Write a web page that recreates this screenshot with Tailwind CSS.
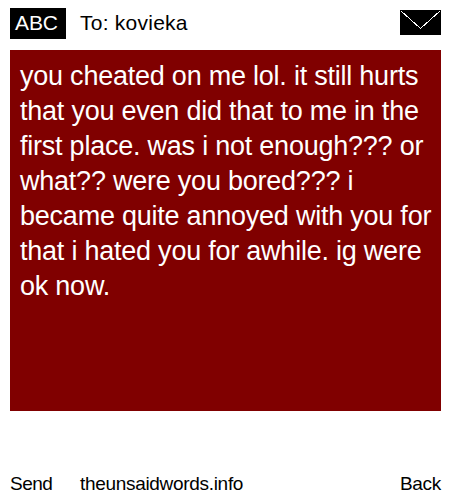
<!DOCTYPE html>
<html lang="en"><head><meta charset="utf-8"><title>Message</title>
<script src="https://cdn.jsdelivr.net/npm/@tailwindcss/browser@4"></script></head>
<body class="bg-white font-['Liberation_Sans',Arial,sans-serif]">
<main class="w-[450px] h-[500px] flex flex-col pl-[10px] pr-[9px] pt-2 overflow-hidden">
<header class="h-[42px] flex items-start text-black">
<div class="w-14 h-[31px] bg-black text-white text-[21px] leading-[30px] tracking-[-0.1px] pl-[5px]">ABC</div>
<div class="ml-[14px] text-[21px] leading-[30px] tracking-[0.25px]">To: kovieka</div>
<svg class="ml-auto mt-[2px]" width="41" height="25" viewBox="0 0 41 25"><path fill="#000" d="M0 0h41v25H0z"/><path d="M1 1L20.500 18.500L40 1" fill="none" stroke="#fff" shape-rendering="crispEdges"/></svg>
</header>
<section class="h-[361px] bg-[#800000] text-white px-[10px] pt-[9px] text-[27px] leading-[35px] tracking-[-0.23px] whitespace-nowrap">
<p>you cheated on me lol. it still hurts<br>that you even did that to me in the<br>first place. was i not enough??? or<br>what?? were you bored??? i<br>became quite annoyed with you for<br>that i hated you for awhile. ig were<br>ok now.</p>
</section>
<footer class="mt-[62px] flex text-[19px] leading-[22px] tracking-[-0.31px] text-black"><span class="w-[70px] tracking-[-0.5px]">Send</span><span>theunsaidwords.info</span><span class="ml-auto">Back</span></footer>
</main></body></html>
